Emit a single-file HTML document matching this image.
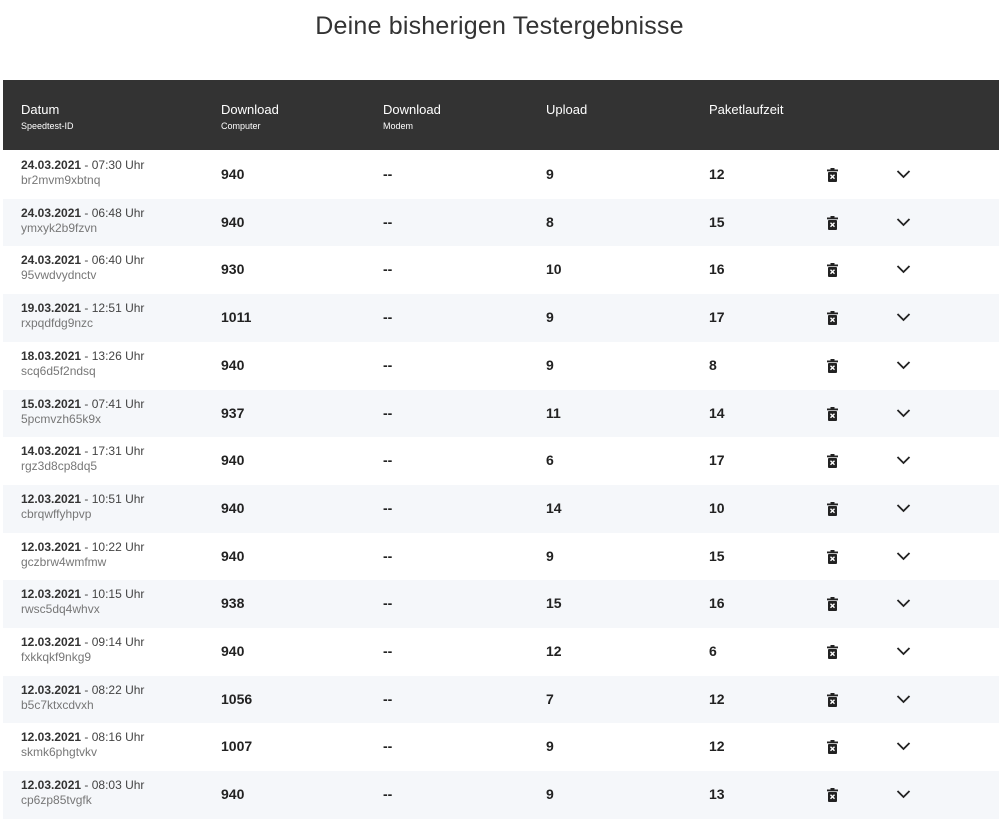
<!DOCTYPE html>
<html><head><meta charset="utf-8"><style>
body{margin:0;background:#fff;font-family:"Liberation Sans",sans-serif;color:#222;width:999px;height:820px;overflow:hidden;position:relative}
h1{position:absolute;top:12px;left:0;width:999px;text-align:center;font-weight:normal;font-size:25px;margin:0;color:#333;letter-spacing:0.2px}
.head{position:absolute;left:3px;top:80px;width:996px;height:70px;background:#333;color:#fff}
.head div{position:absolute;top:22px;font-size:13px}
.head small{display:block;font-size:9px;margin-top:4px}
.row{position:absolute;left:3px;width:996px;height:47.7px}
.row.alt{background:#f5f7fa}
.c{position:absolute}
.d{left:18px;top:7px;font-size:12px;color:#444;line-height:15px}
.d b{color:#333}
.d span{color:#777}
.v{top:15px;font-size:14px;font-weight:bold;color:#222}
.tr{left:824px;top:17px}
.ch{left:893px;top:18px}
</style></head><body>
<h1>Deine bisherigen Testergebnisse</h1>
<div class="head">
<div style="left:18px">Datum<small>Speedtest-ID</small></div>
<div style="left:218px">Download<small>Computer</small></div>
<div style="left:380px">Download<small>Modem</small></div>
<div style="left:543px">Upload</div>
<div style="left:706px">Paketlaufzeit</div>
</div>
<div id="rows"></div>
<script>
var d=[["24.03.2021","07:30","br2mvm9xbtnq",940,9,12],["24.03.2021","06:48","ymxyk2b9fzvn",940,8,15],["24.03.2021","06:40","95vwdvydnctv",930,10,16],["19.03.2021","12:51","rxpqdfdg9nzc",1011,9,17],["18.03.2021","13:26","scq6d5f2ndsq",940,9,8],["15.03.2021","07:41","5pcmvzh65k9x",937,11,14],["14.03.2021","17:31","rgz3d8cp8dq5",940,6,17],["12.03.2021","10:51","cbrqwffyhpvp",940,14,10],["12.03.2021","10:22","gczbrw4wmfmw",940,9,15],["12.03.2021","10:15","rwsc5dq4whvx",938,15,16],["12.03.2021","09:14","fxkkqkf9nkg9",940,12,6],["12.03.2021","08:22","b5c7ktxcdvxh",1056,7,12],["12.03.2021","08:16","skmk6phgtvkv",1007,9,12],["12.03.2021","08:03","cp6zp85tvgfk",940,9,13]];
var h="";
d.forEach(function(r,i){
h+='<div class="row'+(i%2?' alt':'')+'" style="top:'+(151+i*47.7)+'px">'+
'<div class="c d"><b>'+r[0]+'</b> - '+r[1]+' Uhr<br><span>'+r[2]+'</span></div>'+
'<div class="c v" style="left:218px">'+r[3]+'</div>'+
'<div class="c v" style="left:380px">--</div>'+
'<div class="c v" style="left:543px">'+r[4]+'</div>'+
'<div class="c v" style="left:706px">'+r[5]+'</div>'+
'<svg class="c tr" width="11" height="14" viewBox="0 0 11 14"><rect x="0" y="1.5" width="11" height="1.8" fill="#222"/><rect x="3.5" y="0" width="4" height="2" fill="#222"/><rect x="1" y="4" width="9" height="10" rx="1" fill="#222"/><path d="M3.5 6.8l4 4M7.5 6.8l-4 4" stroke="#fff" stroke-width="1.4"/></svg>'+
'<svg class="c ch" width="15" height="10" viewBox="0 0 15 10"><path d="M1.5 2l6 6 6-6" fill="none" stroke="#222" stroke-width="1.8"/></svg>'+
'</div>';});
document.getElementById("rows").innerHTML=h;
</script>
</body></html>
